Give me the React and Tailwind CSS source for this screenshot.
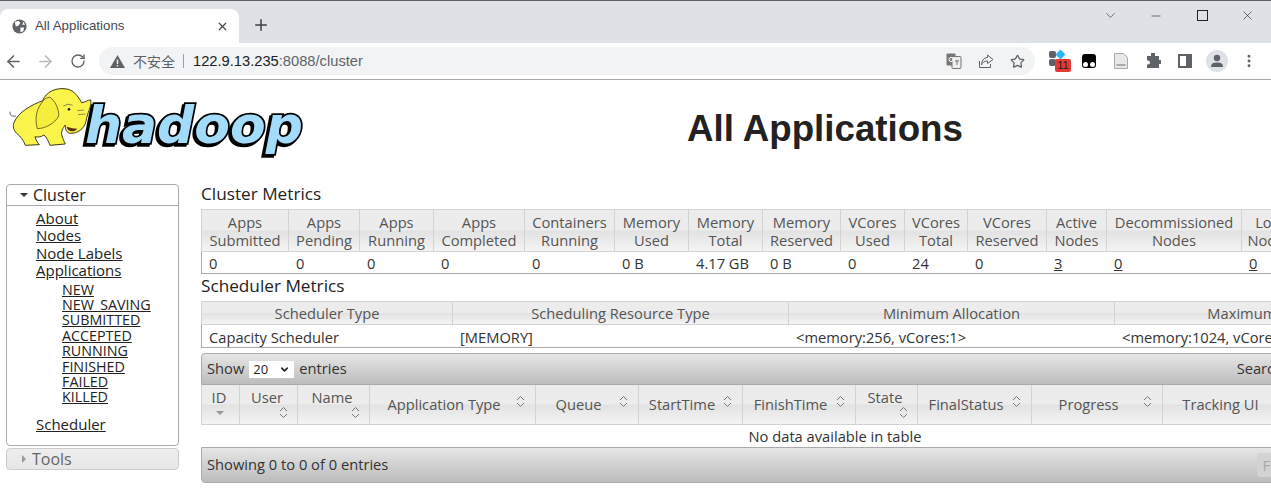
import React from 'react';
import { ArrowLeft, ArrowRight, RotateCw, Star, Plus, X, Minus, ChevronDown, MoreVertical } from 'lucide-react';

const clusterCols = [
  { w: 'w-[88px]', head: ['Apps', 'Submitted'], val: '0' },
  { w: 'w-[71px]', head: ['Apps', 'Pending'], val: '0' },
  { w: 'w-[74px]', head: ['Apps', 'Running'], val: '0' },
  { w: 'w-[91px]', head: ['Apps', 'Completed'], val: '0' },
  { w: 'w-[90px]', head: ['Containers', 'Running'], val: '0' },
  { w: 'w-[74px]', head: ['Memory', 'Used'], val: '0 B' },
  { w: 'w-[74px]', head: ['Memory', 'Total'], val: '4.17 GB' },
  { w: 'w-[78px]', head: ['Memory', 'Reserved'], val: '0 B' },
  { w: 'w-[64px]', head: ['VCores', 'Used'], val: '0' },
  { w: 'w-[63px]', head: ['VCores', 'Total'], val: '24' },
  { w: 'w-[79px]', head: ['VCores', 'Reserved'], val: '0' },
  { w: 'w-[60px]', head: ['Active', 'Nodes'], val: '3', link: true },
  { w: 'w-[135px]', head: ['Decommissioned', 'Nodes'], val: '0', link: true },
  { w: 'w-[56px]', head: ['Lost', 'Nodes'], val: '0', link: true },
];

const schedulerCols = [
  { w: 'w-[252px]', head: 'Scheduler Type', val: 'Capacity Scheduler' },
  { w: 'w-[336px]', head: 'Scheduling Resource Type', val: '[MEMORY]' },
  { w: 'w-[326px]', head: 'Minimum Allocation', val: '<memory:256, vCores:1>' },
  { w: 'w-[326px]', head: 'Maximum Allocation', val: '<memory:1024, vCores:4>' },
];

const appCols = [
  { w: 'w-[39px]', label: 'ID', stacked: true, sorted: true },
  { w: 'w-[58px]', label: 'User', stacked: true },
  { w: 'w-[72px]', label: 'Name', stacked: true },
  { w: 'w-[166px]', label: 'Application Type' },
  { w: 'w-[103px]', label: 'Queue' },
  { w: 'w-[104px]', label: 'StartTime' },
  { w: 'w-[113px]', label: 'FinishTime' },
  { w: 'w-[62px]', label: 'State', stacked: true },
  { w: 'w-[114px]', label: 'FinalStatus' },
  { w: 'w-[131px]', label: 'Progress' },
  { w: 'w-[116px]', label: 'Tracking UI', noSort: true },
  { w: 'w-[190px]', label: 'Blacklisted Nodes', noSort: true },
];

const appLinks = ['NEW', 'NEW_SAVING', 'SUBMITTED', 'ACCEPTED', 'RUNNING', 'FINISHED', 'FAILED', 'KILLED'];

const thClass = "border-r border-[#d3d3d3] bg-[linear-gradient(#ececec_0%,#ececec_48%,#e2e2e2_52%,#f4f4f4_100%)] font-normal text-[#555] text-center align-middle";

const SortIcon = () => (
  <svg width="9" height="13" viewBox="0 0 9 13" fill="none" stroke="#777" strokeWidth="1">
    <path d="M1 5 L4.5 1.5 L8 5" />
    <path d="M1 8 L4.5 11.5 L8 8" />
  </svg>
);

// traced from the reference at 3x, hence the scale on the elephant group
const Logo = () => (
  <svg width="320" height="90" viewBox="0 0 320 90" className="shrink-0">
    <text x="85" y="63" fontFamily="DejaVu Sans, sans-serif" fontWeight="700" fontStyle="italic" fontSize="52" textLength="218" lengthAdjust="spacingAndGlyphs" fill="#a3dbfb" stroke="#000" strokeWidth="3.5" paintOrder="stroke" className="drop-shadow-[-2px_2px_0_#000]">hadoop</text>
    <g transform="scale(0.3333)">
      <path d="M30 95 Q28 112 48 108" fill="none" stroke="#666" strokeWidth="3" />
      <path d="M42 128 C55 95 95 75 128 62 C138 35 170 20 205 28 C225 34 238 55 245 68 C255 68 265 58 272 60 C276 80 262 95 258 125 C252 148 232 160 212 160 C200 160 195 148 196 135 C188 145 182 155 186 168 C190 178 192 186 196 192 L150 196 C146 185 140 172 132 165 C122 172 112 172 105 170 C108 180 112 188 118 194 L76 196 C70 180 62 170 50 160 C40 150 38 140 42 128 Z" fill="#fbf44a" stroke="#3d3a18" strokeWidth="3" />
      <path d="M130 62 C112 82 102 112 112 146 C135 146 165 130 176 108 C178 88 165 62 150 52 C142 52 134 56 130 62 Z" fill="#f6ee3c" stroke="#55501c" strokeWidth="2.5" />
      <path d="M200 140 C202 156 222 158 232 146 C222 146 212 144 200 140 Z" fill="#5a3015" />
      <circle cx="207" cy="88" r="4" fill="#222" />
      <path d="M190 78 Q205 68 218 76 M232 92 L252 90 M234 104 L256 102" fill="none" stroke="#555" strokeWidth="2" />
    </g>
  </svg>
);

const TabBar = () => (
  <div className="flex h-[43px] shrink-0 bg-[#dee1e6] border-t border-[#5f6368]">
    <div className="flex items-end w-[239px] shrink-0">
      <div className="flex items-center h-[34px] w-full bg-white rounded-t-[8px] pl-[12px] pr-[10px]">
        <svg width="15" height="15" viewBox="0 0 16 16" className="shrink-0">
          <circle cx="8" cy="8" r="7.5" fill="#5f6368" />
          <path d="M3 3 L7 2 L9 4 L7 7 L4 8 Z M9 9 L13 9 L12 13 L9 14 Z M12 3 L14 6 L11 6 Z" fill="#fff" />
        </svg>
        <span className="ml-[8px] text-[13.3px] text-[#45494d] flex-1">All Applications</span>
        <X size={13} strokeWidth={2.4} color="#45494d" />
      </div>
    </div>
    <div className="flex items-center justify-center w-[44px] pt-[6px]">
      <Plus size={18} strokeWidth={2} color="#3c4043" />
    </div>
    <div className="flex-1" />
    <div className="flex items-center pb-[13px] text-[#222]">
      <ChevronDown size={15} strokeWidth={1} className="mr-[31px]" />
      <Minus size={14} strokeWidth={1} className="mr-[34px]" />
      <div className="w-[11px] h-[11px] border border-[#222] mr-[32px]" />
      <X size={15} strokeWidth={1} className="mr-[16px]" />
    </div>
  </div>
);

const AddressBar = () => (
  <div className="flex items-center h-[37px] shrink-0 bg-white border-b border-[#a9a9a9]">
    <ArrowLeft size={19} strokeWidth={2} color="#5f6368" className="ml-[4px]" />
    <ArrowRight size={19} strokeWidth={2} color="#b6b9bc" className="ml-[13px]" />
    <RotateCw size={16} strokeWidth={2} color="#5f6368" className="ml-[15px]" />
    <div className="flex items-center h-[28px] w-[936px] ml-[13px] rounded-full bg-[#f1f3f4]">
      <svg width="15" height="13" viewBox="0 0 15 13" className="ml-[11px] shrink-0">
        <path d="M7.5 0 L15 13 L0 13 Z" fill="#5f6368" />
        <rect x="6.8" y="4.5" width="1.4" height="4.5" fill="#f1f3f4" />
        <rect x="6.8" y="10" width="1.4" height="1.4" fill="#f1f3f4" />
      </svg>
      <span className="ml-[8px] text-[14px] text-[#5f6368] font-['Noto_Sans_CJK_SC',sans-serif]">不安全</span>
      <span className="ml-[8px] w-px h-[14px] bg-[#9aa0a6]" />
      <span className="ml-[9px] text-[14.7px] text-[#202124]">122.9.13.235<span className="text-[#5f6368]">:8088/cluster</span></span>
      <div className="flex-1" />
      <svg width="16" height="16" viewBox="0 0 16 16" className="mr-[16px]">
        <rect x="0.5" y="0.5" width="9" height="12" rx="1" fill="#777" />
        <rect x="6" y="3.5" width="9" height="12" rx="1" fill="#eee" stroke="#777" />
        <circle cx="5" cy="6.5" r="2" fill="none" stroke="#fff" />
        <path d="M9 8 H13 M11 7 V12" stroke="#777" />
      </svg>
      <svg width="16" height="16" viewBox="0 0 16 16" fill="none" stroke="#5f6368" strokeWidth="1" className="mr-[16px]">
        <path d="M1.5 8 V14.5 H12.5 V11" />
        <path d="M9.5 2 L15 6.5 L9.5 10.5 V8 C6 8 4.5 9.5 3.5 12 C3.5 8 5.5 5 9.5 4.5 Z" />
      </svg>
      <Star size={15} strokeWidth={2} color="#5f6368" className="mr-[10px]" />
    </div>
    <div className="relative ml-[14px] w-[20px] h-[20px]">
      <div className="absolute left-0 top-0 w-[7px] h-[7px] rounded-[2px] bg-[#5f6368]" />
      <div className="absolute left-[8px] top-0 w-[7px] h-[7px] rotate-45 bg-[#29b6f6]" />
      <div className="absolute left-0 top-[8px] w-[7px] h-[7px] rounded-[2px] bg-[#5f6368]" />
      <div className="absolute left-[6px] top-[8px] w-[16px] h-[13px] rounded-[2px] bg-[#e53935] text-[11px] leading-[13px] text-center text-[#222]">11</div>
    </div>
    <div className="relative ml-[13px] w-[14px] h-[14px] rounded-[3px] bg-black">
      <div className="absolute left-[1px] bottom-[1px] w-[5px] h-[5px] rounded-full bg-white" />
      <div className="absolute right-[1px] bottom-[1px] w-[5px] h-[5px] rounded-full bg-white" />
    </div>
    <svg width="14" height="16" viewBox="0 0 14 16" className="ml-[18px]">
      <path d="M0.5 0.5 H9.5 L13.5 4.5 V15.5 H0.5 Z" fill="#e8e8e8" stroke="#aaa" />
      <rect x="2.5" y="11" width="9" height="2" fill="#aaa" />
    </svg>
    <svg width="16" height="16" viewBox="0 0 16 16" className="ml-[17px]">
      <path d="M6 1 A2 2 0 0 1 10 1 V3 H14 V7 H15 A2 2 0 0 1 15 11 H14 V15 H2 V11.5 H3 A2 2 0 0 0 3 7.5 H2 V3 H6 Z" fill="#5f6368" />
    </svg>
    <div className="ml-[17px] w-[14px] h-[14px] border-2 border-[#5f6368] border-r-[6px]" />
    <div className="flex items-center justify-center ml-[14px] w-[22px] h-[22px] rounded-full bg-[#dee1e6]">
      <svg width="14" height="14" viewBox="0 0 14 14" fill="#5f6368">
        <circle cx="7" cy="4" r="3.2" />
        <path d="M1 13 C1 9 4 8.5 7 8.5 C10 8.5 13 9 13 13 Z" />
      </svg>
    </div>
    <MoreVertical size={16} strokeWidth={2.4} color="#5f6368" className="ml-[13px]" />
  </div>
);

const Sidebar = () => (
  <aside className="w-[173px] shrink-0 ml-[6px] mt-[1px] font-['Open_Sans',sans-serif] text-[#222]">
    <div className="border border-[#aaa] rounded-[4px] h-[262px]">
      <div className="flex items-center h-[21px] border-b border-[#aaa] text-[16px]">
        <span className="ml-[13px] w-0 h-0 border-x-[4px] border-x-transparent border-t-[4px] border-t-[#333]" />
        <span className="ml-[5px]">Cluster</span>
      </div>
      <ul className="pl-[29px] pt-[4px] text-[15px] leading-[17.4px]">
        <li><a className="underline">About</a></li>
        <li><a className="underline">Nodes</a></li>
        <li><a className="underline">Node Labels</a></li>
        <li><a className="underline">Applications</a></li>
        <ul className="pl-[26px] pt-[2px] pb-[11px] text-[14.3px] leading-[15.4px]">
          {appLinks.map(l => <li key={l}><a className="underline">{l}</a></li>)}
        </ul>
        <li><a className="underline">Scheduler</a></li>
      </ul>
    </div>
    <div className="flex items-center h-[22px] mt-[2px] border border-[#ccc] rounded-[4px] bg-[linear-gradient(#eee,#e6e6e6)] text-[16px] text-[#666]">
      <span className="ml-[15px] w-0 h-0 border-y-[4px] border-y-transparent border-l-[4px] border-l-[#999]" />
      <span className="ml-[6px]">Tools</span>
    </div>
  </aside>
);

const App = () => {
  return (
    <div className="flex flex-col w-[1271px] h-[490px] overflow-hidden bg-white font-['Liberation_Sans',sans-serif]">
      <TabBar />
      <AddressBar />

      <header className="flex h-[103px] shrink-0">
        <div className="w-[320px] shrink-0"><Logo /></div>
        <h1 className="flex-1 text-center text-[36.7px] font-bold text-[#222] pt-[21px] pl-[59px]">All Applications</h1>
      </header>

      <div className="flex flex-1 min-h-0">
        <Sidebar />

        <main className="ml-[22px] flex-1 min-w-0 overflow-hidden font-['Open_Sans',sans-serif] text-[14.7px] text-[#333]">
          <h3 className="text-[17.2px] leading-[21px] pb-[5px] text-[#222]">Cluster Metrics</h3>
          <table className="table-fixed border-separate border-spacing-0 w-[1097px] leading-[18px]">
            <thead>
              <tr>
                {clusterCols.map(c => (
                  <th key={c.head.join(' ')} className={`${c.w} ${thClass} h-[43px] pt-[1px] border-t border-b border-[#d3d3d3] first:border-l`}>
                    {c.head[0]}<br />{c.head[1]}
                  </th>
                ))}
              </tr>
            </thead>
            <tbody>
              <tr>
                {clusterCols.map((c, i) => (
                  <td key={i} className={`h-[22px] pl-[7px] pt-[1px] border-b border-[#aaa] ${i === 0 ? 'border-l' : ''}`}>
                    {c.link ? <a className="underline">{c.val}</a> : c.val}
                  </td>
                ))}
              </tr>
            </tbody>
          </table>

          <h3 className="text-[17.2px] leading-[23px] pb-[2px] text-[#222]">Scheduler Metrics</h3>
          <table className="table-fixed border-separate border-spacing-0 w-[1240px] mt-[2px] leading-[18px]">
            <thead>
              <tr>
                {schedulerCols.map(c => (
                  <th key={c.head} className={`${c.w} ${thClass} h-[24px] border-t border-b border-[#d3d3d3] first:border-l`}>{c.head}</th>
                ))}
              </tr>
            </thead>
            <tbody>
              <tr>
                {schedulerCols.map((c, i) => (
                  <td key={c.head} className={`h-[23px] pl-[7px] pt-[2px] border-b border-[#aaa] ${i === 0 ? 'border-l' : ''}`}>{c.val}</td>
                ))}
              </tr>
            </tbody>
          </table>

          <div className="flex items-center justify-between w-[1268px] h-[32px] mt-[5px] pl-[5px] pb-[2px] border border-[#aaa] rounded-t-[4px] bg-[linear-gradient(#e6e6e6,#bcbcbc)]">
            <div className="flex items-center">
              <span>Show</span>
              <span className="flex items-center justify-between w-[45px] h-[17px] mx-[5px] mt-[3px] pl-[4px] pr-[4px] bg-white text-[13px] text-[#222]">
                20
                <ChevronDown size={11} strokeWidth={3.5} color="#222" />
              </span>
              <span>entries</span>
            </div>
            <span className="pr-[181px]">Search:</span>
          </div>

          <table className="table-fixed border-separate border-spacing-0 w-[1268px] leading-[18px]">
            <thead>
              <tr>
                {appCols.map(c => (
                  <th key={c.label} className={`${c.w} ${thClass} h-[40px] pb-[2px] border-b border-[#d3d3d3] first:border-l`}>
                    {c.stacked ? (
                      <div className="flex flex-col items-center">
                        <span className="mr-[3px]">{c.label}</span>
                        <span className="flex justify-end w-full pr-[9px] h-[14px]">
                          {c.sorted
                            ? <span className="mr-[6px] mt-[5px] w-0 h-0 border-x-[4px] border-x-transparent border-t-[4px] border-t-[#999]" />
                            : <SortIcon />}
                        </span>
                      </div>
                    ) : (
                      <div className="relative">
                        <span className={c.noSort ? 'block' : 'block pr-[17px]'}>{c.label}</span>
                        {!c.noSort && <span className="absolute right-[10px] top-0"><SortIcon /></span>}
                      </div>
                    )}
                  </th>
                ))}
              </tr>
            </thead>
            <tbody>
              <tr>
                <td colSpan={appCols.length} className="h-[22px] text-center">No data available in table</td>
              </tr>
            </tbody>
          </table>

          <div className="flex items-center justify-between w-[1268px] h-[36px] pl-[5px] pb-[1px] border border-[#aaa] rounded-b-[4px] bg-[linear-gradient(#e6e6e6,#bcbcbc)]">
            <span>Showing 0 to 0 of 0 entries</span>
            <span className="mr-[171px] px-[5px] h-[24px] leading-[24px] rounded-[4px] bg-[#d3d3d3] text-[#aaa]">First</span>
          </div>
        </main>
      </div>
    </div>
  );
};

export default App;
